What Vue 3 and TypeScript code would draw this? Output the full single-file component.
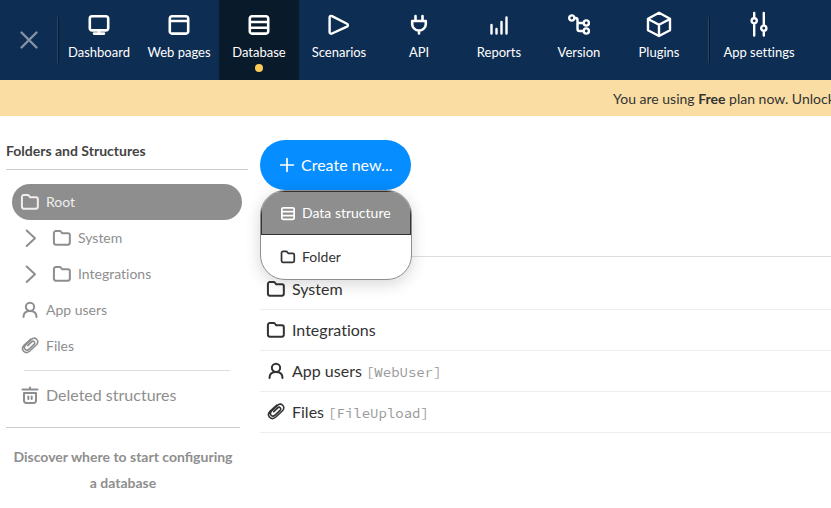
<script setup lang="ts">
import { ref } from 'vue'

type IconName =
  | 'close' | 'dashboard' | 'pages' | 'database' | 'scenarios' | 'api' | 'reports'
  | 'version' | 'plugins' | 'settings' | 'folder' | 'user' | 'clip' | 'trash'
  | 'chevron' | 'plus'

const icons: Record<IconName, string> = {
  close: 'M4.5 4.5L19.5 19.5M19.5 4.5L4.5 19.5',
  dashboard: 'M5 4.2h14a2.2 2.2 0 0 1 2.2 2.2v9.8a2.2 2.2 0 0 1-2.2 2.2H5a2.2 2.2 0 0 1-2.2-2.2v-9.8A2.2 2.2 0 0 1 5 4.2zM12 18.5v3M7 21.6h10',
  pages: 'M5 4.2h14a2.2 2.2 0 0 1 2.2 2.2v13a2.2 2.2 0 0 1-2.2 2.2h-14a2.2 2.2 0 0 1-2.2-2.2v-13a2.2 2.2 0 0 1 2.2-2.2zM3 9h18',
  database: 'M5 4.2h14a2.2 2.2 0 0 1 2.2 2.2v13a2.2 2.2 0 0 1-2.2 2.2h-14a2.2 2.2 0 0 1-2.2-2.2v-13a2.2 2.2 0 0 1 2.2-2.2zM3 10h18M3 15.8h18',
  scenarios: 'M2.6 5.5v14.6c0 1.3 1.2 2 2.4 1.4L20 14.6c1.2-.6 1.2-2.3 0-2.9L5 4.1C3.8 3.5 2.6 4.2 2.6 5.5z',
  api: 'M8.5 4v5M15.5 4v5M5.2 9h13.6v3.2a6.8 6.3 0 0 1-13.6 0zM12 18.5v3',
  reports: 'M4.5 13v8.5M9.5 17v4.5M14.5 10v11.5M19.5 5.5v16',
  version: 'M2.2 6a2.6 2.6 0 1 0 5.2 0a2.6 2.6 0 1 0-5.2 0M16.7 11a2.6 2.6 0 1 0 5.2 0a2.6 2.6 0 1 0-5.2 0M16.7 19a2.6 2.6 0 1 0 5.2 0a2.6 2.6 0 1 0-5.2 0M7.4 6h1.1a2 2 0 0 1 2 2v9a2 2 0 0 0 2 2h4.2M10.5 11h6.2',
  plugins: 'M12 .8L23 6.8v11.4L12 24L1 18.2V6.8zM1.5 7.2L12 12.8L22.5 7.2M12 12.8V24',
  settings: 'M7.2 1v5M7.2 11.5V23.5M16.8 1v12.5M16.8 19v4.5M4.6 8.8a2.6 2.6 0 1 0 5.2 0a2.6 2.6 0 1 0-5.2 0M14.2 16.2a2.6 2.6 0 1 0 5.2 0a2.6 2.6 0 1 0-5.2 0',
  folder: 'M4.5 3.7h4.6c.9 0 1.5.4 2 1.1l1.2 1.6h6.9a2.2 2.2 0 0 1 2.2 2.2v9.2a2.2 2.2 0 0 1-2.2 2.2H4.5a2.2 2.2 0 0 1-2.2-2.2V5.9a2.2 2.2 0 0 1 2.2-2.2z',
  user: 'M7 8.2a5 5 0 1 0 10 0a5 5 0 1 0-10 0M4.2 20.5c0-4.8 3-7.3 7.8-7.3s7.8 2.5 7.8 7.3',
  clip: 'M13 3.6L5 10.9c-5.2 5.2 1.2 12 6.8 7.1l8-7.5c4.6-4.7-1.7-10.7-6.4-6.2l-6.9 6.6c-3.5 3.7 1 8 4.4 4.8l6-5.7c2.2-2.3-.8-5-2.9-2.9l-4.7 4.5',
  trash: 'M3 5.5h18M12 3v2.5M4.8 9.6h14.4v9.4a2.5 2.5 0 0 1-2.5 2.5H7.3a2.5 2.5 0 0 1-2.5-2.5zM10 13.8v3M14 13.8v3',
  chevron: 'M8 3L18 12.2L8 21.5',
  plus: 'M12 2.5v19M2.5 12h19',
}

interface NavItem { label: string; icon: IconName }

const navItems: NavItem[] = [
  { label: 'Dashboard', icon: 'dashboard' },
  { label: 'Web pages', icon: 'pages' },
  { label: 'Database', icon: 'database' },
  { label: 'Scenarios', icon: 'scenarios' },
  { label: 'API', icon: 'api' },
  { label: 'Reports', icon: 'reports' },
  { label: 'Version', icon: 'version' },
  { label: 'Plugins', icon: 'plugins' },
]

interface Entry { label: string; icon: IconName; type?: string }

const entries: Entry[] = [
  { label: 'System', icon: 'folder' },
  { label: 'Integrations', icon: 'folder' },
  { label: 'App users', icon: 'user', type: 'WebUser' },
  { label: 'Files', icon: 'clip', type: 'FileUpload' },
]

const activeNav = ref('Database')
const menuOpen = ref(true)
</script>

<template>
  <div class="page">
    <header class="topbar">
      <button class="close" type="button" aria-label="Close">
        <svg class="icon-nav" viewBox="0 0 24 24"><path :d="icons.close" /></svg>
      </button>
      <span class="separator"></span>
      <nav class="nav">
        <a
          v-for="item in navItems"
          :key="item.label"
          href="#"
          class="nav-item"
          :class="{ active: item.label === activeNav }"
          @click.prevent="activeNav = item.label"
        >
          <svg class="icon-nav" :class="item.icon" viewBox="0 0 24 24"><path :d="icons[item.icon]" /></svg>
          <span>{{ item.label }}</span>
          <i v-if="item.label === activeNav" class="dot"></i>
        </a>
      </nav>
      <span class="separator after-nav"></span>
      <a href="#" class="nav-item">
        <svg class="icon-nav" viewBox="0 0 24 24"><path :d="icons.settings" /></svg>
        <span>App settings</span>
      </a>
    </header>

    <p class="banner">You are using <strong>Free</strong> plan now. Unlock</p>

    <div class="body">
      <aside class="sidebar">
        <h2>Folders and Structures</h2>
        <ul class="tree">
          <li>
            <a href="#" class="tree-item root">
              <svg class="icon" viewBox="0 0 24 24"><path :d="icons.folder" /></svg>
              <span class="label">Root</span>
            </a>
          </li>
          <li v-for="entry in entries" :key="entry.label">
            <a href="#" class="tree-item">
              <svg v-if="entry.icon === 'folder'" class="icon chevron" viewBox="0 0 24 24"><path :d="icons.chevron" /></svg>
              <svg class="icon" :class="entry.icon" viewBox="0 0 24 24"><path :d="icons[entry.icon]" /></svg>
              <span class="label">{{ entry.label }}</span>
            </a>
          </li>
        </ul>
        <a href="#" class="deleted">
          <svg class="icon" viewBox="0 0 24 24"><path :d="icons.trash" /></svg>
          <span class="label">Deleted structures</span>
        </a>
        <a href="#" class="discover">Discover where to start configuring a database</a>
      </aside>

      <main class="content">
        <div class="toolbar">
          <div class="create-wrap">
            <button class="create" type="button" :aria-expanded="menuOpen" @click="menuOpen = !menuOpen">
              <svg class="icon-small" viewBox="0 0 24 24"><path :d="icons.plus" /></svg>
              <span class="label">Create new...</span>
            </button>
            <div v-if="menuOpen" class="menu">
              <button type="button" class="menu-item selected">
                <svg class="icon-small" viewBox="0 0 24 24"><path :d="icons.database" /></svg>
                <span class="label">Data structure</span>
              </button>
              <button type="button" class="menu-item">
                <svg class="icon-small" viewBox="0 0 24 24"><path :d="icons.folder" /></svg>
                <span class="label">Folder</span>
              </button>
            </div>
          </div>
        </div>
        <ul class="list">
          <li v-for="entry in entries" :key="entry.label">
            <a href="#" class="row">
              <svg class="icon" :class="entry.icon" viewBox="0 0 24 24"><path :d="icons[entry.icon]" /></svg>
              <span>{{ entry.label }} <code v-if="entry.type">[{{ entry.type }}]</code></span>
            </a>
          </li>
        </ul>
      </main>
    </div>
  </div>
</template>

<style>
body {
  margin: 0;
  background: #fff;
}
</style>

<style scoped>
.page {
  overflow: hidden;
  font-family: Lato, "Liberation Sans", sans-serif;
  font-size: 14px;
  font-variant-ligatures: none;
  color: #333;
}

a {
  color: inherit;
  text-decoration: none;
}

button {
  padding: 0;
  border: 0;
  background: none;
  font: inherit;
  font-variant-ligatures: none;
  color: inherit;
  cursor: pointer;
}

ul {
  margin: 0;
  padding: 0;
  list-style: none;
}

svg {
  flex: none;
  fill: none;
  stroke: currentColor;
  stroke-width: 2.4;
  stroke-linecap: round;
  stroke-linejoin: round;
  overflow: visible;
}

.label {
  padding-bottom: 2px;
}

.icon-nav {
  width: 24px;
  height: 24px;
}

.icon {
  width: 20px;
  height: 20px;
}

.icon.clip {
  stroke-width: 1.9;
}

.icon-small {
  width: 16px;
  height: 16px;
  stroke-width: 2.6;
}

.topbar {
  display: flex;
  height: 80px;
  background: #0e2d52;
  color: #fff;
}

.close {
  display: flex;
  align-items: center;
  justify-content: center;
  width: 57px;
  color: #8593a7;
}

.separator {
  box-sizing: border-box;
  width: 2px;
  height: 46px;
  margin-top: 17px;
  border-left: 1px solid #2b4566;
  border-right: 1px solid #07192d;
}

.separator.after-nav {
  margin-left: 9px;
  margin-right: 9px;
}

.nav {
  display: flex;
}

.nav-item {
  position: relative;
  display: flex;
  flex-direction: column;
  align-items: center;
  gap: 8px;
  box-sizing: border-box;
  width: 80px;
  padding-top: 12px;
  font-size: 13px;
  line-height: 16px;
  white-space: nowrap;
}

.nav-item.active {
  background: #091a2b;
}

.dashboard,
.pages,
.database,
.api {
  stroke-width: 2.6;
}

.dot {
  position: absolute;
  bottom: 8px;
  width: 8px;
  height: 8px;
  border-radius: 50%;
  background: #fbcb55;
}

.banner {
  margin: 0;
  padding-left: 613px;
  line-height: 37px;
  height: 36px;
  overflow: hidden;
  white-space: nowrap;
  background: #f9dda3;
}

.body {
  display: flex;
  gap: 12px;
  padding-top: 24px;
}

.sidebar {
  flex: none;
  box-sizing: border-box;
  width: 248px;
  padding-left: 6px;
  color: #8e8e8e;
}

h2 {
  margin: 0;
  padding-bottom: 7px;
  border-bottom: 1px solid #ccc;
  font-size: 14px;
  font-weight: 700;
  line-height: 22px;
  color: #444;
}

.tree {
  margin: 14px 6px 0;
}

.tree-item {
  display: flex;
  align-items: center;
  gap: 6px;
  height: 36px;
  padding-left: 8px;
}

.tree-item.root {
  border-radius: 18px;
  background: #8e8e8e;
  color: #efefef;
}

.chevron {
  margin-right: 6px;
}

.deleted {
  display: flex;
  align-items: center;
  gap: 6px;
  margin: 6px 18px 0;
  height: 48px;
  border-top: 1px solid #ddd;
  font-size: 16px;
  white-space: nowrap;
}

.deleted .icon {
  margin-left: -4px;
}

.discover {
  display: block;
  margin-top: 8px;
  margin-right: 8px;
  padding: 16px 6px 0;
  border-top: 1px solid #ccc;
  font-weight: 700;
  font-variant-ligatures: normal;
  line-height: 26px;
  text-align: center;
}

.content {
  flex: 1;
  min-width: 0;
}

.toolbar {
  height: 116px;
  border-bottom: 1px solid #ddd;
}

.create-wrap {
  position: relative;
  width: max-content;
}

.create {
  display: flex;
  align-items: center;
  gap: 6px;
  height: 50px;
  padding: 0 18px 0 19px;
  border-radius: 25px;
  background: #068dff;
  color: #fff;
  font-size: 16px;
}

.menu {
  position: absolute;
  top: 50px;
  left: 0;
  z-index: 1;
  box-sizing: border-box;
  width: 152px;
  border: 1px solid #8e8e8e;
  border-radius: 25px;
  overflow: hidden;
  background: #fff;
  box-shadow: 0 4px 16px rgba(0, 0, 0, 0.16);
}

.menu-item {
  display: flex;
  align-items: center;
  gap: 6px;
  box-sizing: border-box;
  width: 100%;
  height: 44px;
  padding-left: 19px;
  white-space: nowrap;
}

.menu-item.selected {
  padding-left: 18px;
  border: 1px solid #333;
  background: #8e8e8e;
  color: #fff;
}

.list {
  padding-top: 12px;
}

.row {
  display: flex;
  align-items: center;
  gap: 6px;
  height: 40px;
  padding-left: 6px;
  border-bottom: 1px solid #eee;
  font-size: 16px;
  line-height: 20px;
}

code {
  font-family: "Source Code Pro", "Liberation Mono", monospace;
  font-size: 14px;
  line-height: 16px;
  color: #999;
}
</style>
